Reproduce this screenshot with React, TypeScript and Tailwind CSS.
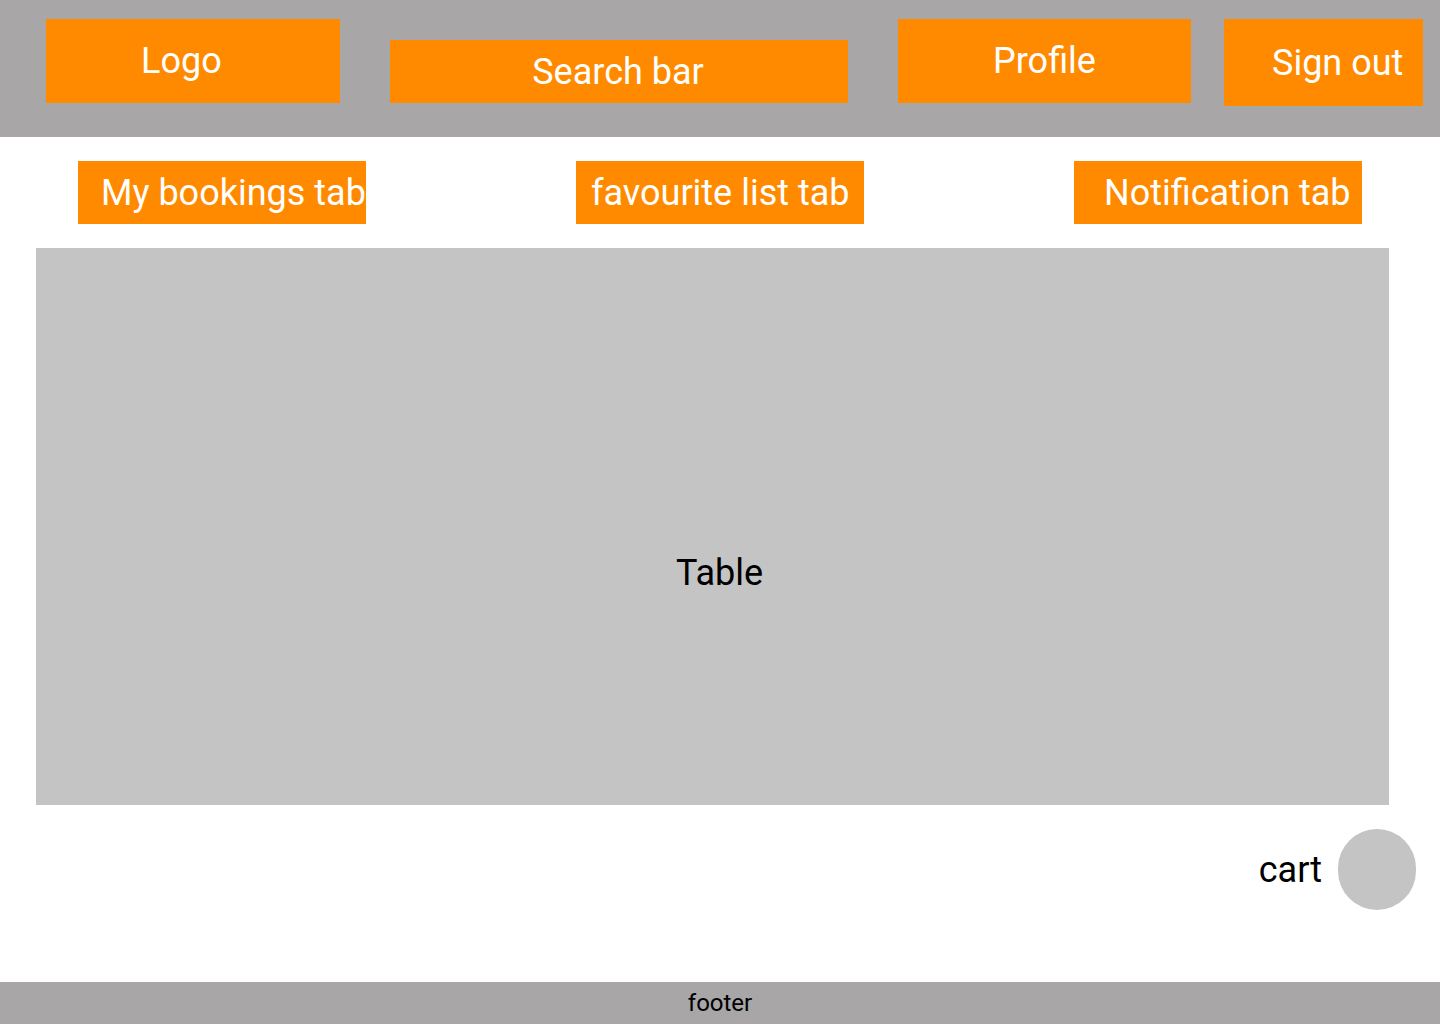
export default function App() {
  return (
    <div className="flex flex-col h-[1024px] bg-white font-['Roboto',sans-serif]">
      <header className="flex items-start h-[137px] bg-[#a8a6a7] text-white text-[36px] leading-none">
        <div className="flex items-center ml-[46px] mt-[19px] w-[294px] h-[84px] pl-[95px] bg-[#ff8a00]">
          Logo
        </div>
        <div className="flex items-center justify-center ml-[50px] mt-[40px] w-[458px] h-[63px] pr-[2px] bg-[#ff8a00]">
          Search bar
        </div>
        <div className="flex items-center justify-center ml-[50px] mt-[19px] w-[293px] h-[84px] bg-[#ff8a00]">
          Profile
        </div>
        <div className="flex items-center ml-[33px] mt-[19px] w-[199px] h-[87px] pl-[48px] bg-[#ff8a00] whitespace-nowrap">
          Sign out
        </div>
      </header>

      <nav className="flex justify-between px-[78px] mt-[24px] text-white text-[36px] leading-none">
        <div className="flex items-center w-[288px] h-[63px] pl-[23px] bg-[#ff8a00] whitespace-nowrap overflow-hidden">
          My bookings tab
        </div>
        <div className="flex items-center w-[288px] h-[63px] pl-[15px] bg-[#ff8a00] whitespace-nowrap">
          favourite list tab
        </div>
        <div className="flex items-center w-[288px] h-[63px] pl-[30px] bg-[#ff8a00] whitespace-nowrap">
          Notification tab
        </div>
      </nav>

      <main className="flex items-center justify-center ml-[36px] mt-[24px] w-[1353px] h-[557px] pt-[92px] pl-[14px] bg-[#c4c4c4] text-black text-[36px]">
        Table
      </main>

      <div className="flex items-center justify-end gap-[16px] mt-[24px] mr-[24px] text-black text-[36px]">
        <span>cart</span>
        <div className="w-[78px] h-[81px] rounded-full bg-[#c4c4c4]" />
      </div>

      <footer className="flex items-center justify-center mt-auto h-[42px] bg-[#a8a6a7] text-black text-[24px]">
        footer
      </footer>
    </div>
  )
}
